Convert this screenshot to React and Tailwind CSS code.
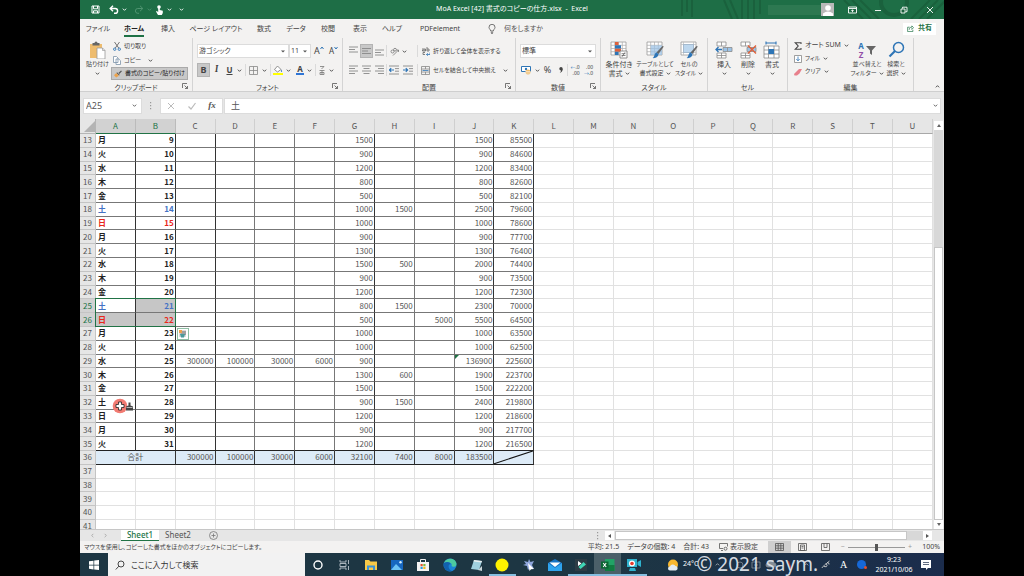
import { useState } from "react";

const COLUMNS = "ABCDEFGHIJKLMNOPQRSTU".split("");
const DAYS = ["月", "火", "水", "木", "金", "土", "日"];
const FIRST_ROW = 13;
const TOTAL_ROW = 36;
const LAST_ROW = 41;

// Sheet row -> [G, J, K] with the occasional extra columns alongside
const VALUES = {
  13: { G: 1500, J: 1500, K: 85500 },
  14: { G: 900, J: 900, K: 84600 },
  15: { G: 1200, J: 1200, K: 83400 },
  16: { G: 800, J: 800, K: 82600 },
  17: { G: 500, J: 500, K: 82100 },
  18: { G: 1000, H: 1500, J: 2500, K: 79600 },
  19: { G: 1000, J: 1000, K: 78600 },
  20: { G: 900, J: 900, K: 77700 },
  21: { G: 1300, J: 1300, K: 76400 },
  22: { G: 1500, H: 500, J: 2000, K: 74400 },
  23: { G: 900, J: 900, K: 73500 },
  24: { G: 1200, J: 1200, K: 72300 },
  25: { G: 800, H: 1500, J: 2300, K: 70000 },
  26: { G: 500, I: 5000, J: 5500, K: 64500 },
  27: { G: 1000, J: 1000, K: 63500 },
  28: { G: 1000, J: 1000, K: 62500 },
  29: { C: 300000, D: 100000, E: 30000, F: 6000, G: 900, J: 136900, K: 225600 },
  30: { G: 1300, H: 600, J: 1900, K: 223700 },
  31: { G: 1500, J: 1500, K: 222200 },
  32: { G: 900, H: 1500, J: 2400, K: 219800 },
  33: { G: 1200, J: 1200, K: 218600 },
  34: { G: 900, J: 900, K: 217700 },
  35: { G: 1200, J: 1200, K: 216500 },
  36: { C: 300000, D: 100000, E: 30000, F: 6000, G: 32100, H: 7400, I: 8000, J: 183500 },
};

const TABS = [
  ["ファイル", "w-9"],
  ["ホーム", "w-9"],
  ["挿入", "w-8"],
  ["ページ レイアウト", "w-16"],
  ["数式", "w-8"],
  ["データ", "w-8"],
  ["校閲", "w-8"],
  ["表示", "w-8"],
  ["ヘルプ", "w-8"],
  ["PDFelement", "w-16"],
];

function Chevron({ className = "" }) {
  return (
    <svg viewBox="0 0 6 6" className={`size-[5px] shrink-0 ${className}`} fill="none" stroke="currentColor" strokeWidth="1.1">
      <path d="M1 2l2 2 2-2" />
    </svg>
  );
}

function Launcher() {
  return (
    <button aria-label="詳細設定" className="absolute right-1 bottom-0.5">
      <svg viewBox="0 0 6 6" className="size-[6px]" fill="none" stroke="#555" strokeWidth="0.8">
        <path d="M.5 5V.5H5M2.5 2.5l3 3M5.500 3v2.500H3" />
      </svg>
    </button>
  );
}

function Group({ label, className, launcher, children }) {
  return (
    <section aria-label={label} className={`relative flex shrink-0 flex-col border-r border-[#d4d4d4] ${className}`}>
      <div className="flex h-[45px] items-start pt-px">{children}</div>
      <div className="flex h-2 items-center justify-center leading-none">{label}</div>
      {launcher && <Launcher />}
    </section>
  );
}

function BigButton({ icon, lines, className = "w-6", chevronBelow }) {
  return (
    <button className={`flex shrink-0 flex-col items-center ${className}`}>
      <span className="flex h-[21px] items-center">{icon}</span>
      <span className="leading-[9px]">{lines[0]}</span>
      {chevronBelow ? (
        <Chevron className="mt-0.5" />
      ) : (
        <span className="flex items-center gap-0.5 leading-[9px]">
          {lines[1]}
          <Chevron />
        </span>
      )}
    </button>
  );
}

function IconButton({ label, active, className = "w-[13px]", children }) {
  return (
    <button
      aria-label={label}
      className={`flex h-[14px] shrink-0 items-center justify-center ${className} ${active ? "border border-[#b4b4b4] bg-[#c8c8c8]" : ""}`}
    >
      {children}
    </button>
  );
}

function Divider() {
  return <span className="h-3 w-px shrink-0 bg-[#dadada]" />;
}

function Picker({ label, value, className }) {
  return (
    <div className={`relative flex h-[14px] shrink-0 border border-[#dcdcdc] bg-white ${className}`}>
      <select aria-label={label} defaultValue={value} className="w-full appearance-none bg-transparent pl-px text-[7px] leading-3 outline-none">
        <option>{value}</option>
      </select>
      <svg viewBox="0 0 4 3" className="absolute top-[5px] right-[3px] h-[3px] w-1 fill-[#555]">
        <path d="M0 .5h4L2 2.500z" />
      </svg>
    </div>
  );
}

function Lines({ widths, justify = "start", top = 1 }) {
  return (
    <svg viewBox="0 0 9 10" className="h-[10px] w-[9px]" stroke="#888" strokeWidth="0.9">
      {widths.map((w, i) => {
        const x = justify === "start" ? 0 : justify === "end" ? 9 - w : (9 - w) / 2;
        return <path key={i} d={`M${x} ${top + i * 2.5}h${w}`} />;
      })}
    </svg>
  );
}

function IndentIcon({ flip }) {
  return (
    <svg viewBox="0 0 10 10" className="size-[10px]" fill="none" stroke="#888" strokeWidth="0.9">
      <path d="M0 1h10M6 3.600h4M6 6.200h4M0 9h10" />
      <path stroke="#2e75b6" strokeWidth="1.200" d={flip ? "M0 5h4.500M2.800 3.200L4.600 5 2.800 6.800" : "M.5 5H5M2.200 3.200L.4 5l1.800 1.800"} />
    </svg>
  );
}

function TableIcon({ kind }) {
  return (
    <svg viewBox="0 0 18 18" className="size-[18px]" fill="none">
      <path d="M1 1h15v13H1z" fill="#fff" stroke="#999" strokeWidth=".8" />
      {kind !== "style" && <path d="M1 4.300h15M1 7.500h15M1 10.700h15M4.700 1v13M8.500 1v13M12.300 1v13" stroke="#aaa" strokeWidth=".7" />}
      {kind === "cond" && (
        <>
          <path d="M5 1h3.500v3.300H5zM5 7.500h6v3.200H5z" fill="#e0603a" />
          <path d="M5 4.300h6v3.200H5zM5 10.700h3.500V14H5z" fill="#2e75b6" />
          <path d="M10 10h7v7h-7z" fill="#fff" stroke="#777" strokeWidth=".8" />
          <path d="M11.500 12.700h4M11.500 14.500h4M15 11.300l-3 4.500" stroke="#555" strokeWidth=".7" />
        </>
      )}
      {kind === "table" && <path d="M4.700 4.300H16V14H4.700z" fill="#9dc3e6" fillOpacity=".75" />}
      {kind === "style" && (
        <>
          <path d="M1 3.500h15M1 11.500h15M3.500 1v13M13.500 1v13" stroke="#bbb" strokeWidth=".7" />
          <path d="M3.500 3.500h10v8h-10z" fill="#bdd7ee" stroke="#8faac2" strokeWidth=".6" />
        </>
      )}
      {kind !== "cond" && (
        <>
          <path d="M17.800 5.500L12.500 13l-2-1.500L16.500 5z" fill="#666" />
          <path d="M10.200 11.300l2.300 1.800c0 2.500-2.500 4.500-6 4 2-.8 1.700-4.300 3.700-5.800z" fill="#2e75b6" />
        </>
      )}
    </svg>
  );
}

function CellsIcon({ kind }) {
  return (
    <svg viewBox="0 0 18 18" className="size-[18px]" fill="#fff" stroke="#8c8c8c" strokeWidth=".8">
      {kind === "format" ? (
        <>
          <path d="M1 5h15v12H1zM1 9h15M1 13h15M5.500 5v12M11 5v12" />
          <path d="M5.500 8h5.500v5H5.500z" fill="#2e75b6" stroke="none" />
          <path d="M3 2h10M3 .5v3M13 .5v3" stroke="#2e75b6" strokeWidth="1.100" />
        </>
      ) : (
        <>
          <path d="M2 1h9v4H2zM6.500 1v4M2 12h9v5H2zM6.500 12v5M2 14.500h9" />
          <path d="M8 6.500h9v4H8zM12.500 6.500v4" fill="#9dc3e6" />
          {kind === "insert" ? (
            <path d="M7 8.500H1M3.500 6L1 8.500 3.500 11" fill="none" stroke="#2e75b6" strokeWidth="1.300" />
          ) : (
            <path d="M9 4.500l8 8M17 4.500l-8 8" fill="none" stroke="#e0603a" strokeWidth="1.400" />
          )}
        </>
      )}
    </svg>
  );
}

function TitleBar() {
  return (
    <header className="relative flex h-[19px] shrink-0 items-center bg-[#1e6e46] text-white">
      <div className="flex w-[110px] items-center gap-[3px] pl-[11px]">
        <button aria-label="上書き保存">
          <svg viewBox="0 0 9 9" className="size-[9px]" fill="none" stroke="#fff" strokeWidth="1">
            <path d="M1 1h7v7H1zM2.500 1v2.800h4V1M2.500 8V5.800h4V8" />
          </svg>
        </button>
        <button aria-label="元に戻す" className="ml-1.5 flex items-center gap-[3px]">
          <svg viewBox="0 0 10 9" className="h-[9px] w-[10px]" fill="none" stroke="#fff" strokeWidth="1.400">
            <path d="M4 .8L1.200 3.500 4 6.200M1.200 3.500h5a2.400 2.400 0 010 4.800H5" />
          </svg>
          <Chevron />
        </button>
        <button aria-label="やり直し" className="ml-1 flex items-center gap-[3px] text-[#4f9470]">
          <svg viewBox="0 0 10 9" className="h-[9px] w-[10px]" fill="none" stroke="currentColor" strokeWidth="1">
            <path d="M6 .8l2.800 2.700L6 6.200M8.800 3.500h-5a2.400 2.400 0 000 4.800H5" />
          </svg>
          <Chevron />
        </button>
        <button aria-label="タッチ/マウス モード" className="flex items-center gap-[3px]">
          <svg viewBox="0 0 9 10" className="h-[10px] w-[9px]" fill="#fff">
            <circle cx="4" cy="2" r="1.800" />
            <path d="M3.200 2h1.600v3l3 .8V8l-1 2H3L1 6.500l.8-.6L3.200 7z" />
          </svg>
          <Chevron />
        </button>
        <button aria-label="クイック アクセスのカスタマイズ" className="ml-1">
          <Chevron />
        </button>
      </div>
      <h1 className="absolute inset-x-0 text-center text-[7px]">MoA Excel [42] 書式のコピーの仕方.xlsx&nbsp; -&nbsp; Excel</h1>
      <svg viewBox="0 0 280 19" preserveAspectRatio="xMaxYMid slice" className="ml-auto h-full w-[280px]" fill="none" stroke="#1a613d" strokeWidth="2">
        <path d="M18 0v16M23 0v12M28 0v17M60 0l8 19M66 0l8 19M78 0v19M84 0v19M90 0v19M96 0v14M180 0l19 19M188 0l19 19M196 0l19 19M266 0l-19 19M274 0l-19 19M282 0l-19 19" />
        <circle cx="230" cy="2" r="13" strokeWidth="4" />
      </svg>
      <div className="absolute right-0 flex h-full items-center">
        <span className="h-2.5 w-[53px] bg-[#2d7851]" />
        <span className="mr-[14px] flex size-[13px] items-end justify-center bg-[#b9b9b9]">
          <svg viewBox="0 0 10 12" className="h-3 w-2.5" fill="#fff">
            <circle cx="5" cy="4" r="2.800" />
            <path d="M0 12V9.500Q5 5.500 10 9.500V12z" />
          </svg>
        </span>
        <button aria-label="リボンの表示オプション" className="flex w-[26px] justify-start">
          <svg viewBox="0 0 9 8" className="h-2 w-[9px]" fill="none" stroke="#fff" strokeWidth=".9">
            <path d="M.5 1h8v6h-8zM.5 2.500h8M4.500 6.200V3.800M3.300 5l1.200-1.200L5.700 5" />
          </svg>
        </button>
        <button aria-label="最小化" className="flex w-[26px] justify-start">
          <svg viewBox="0 0 8 8" className="size-2" stroke="#fff" strokeWidth=".9">
            <path d="M1 4.500h6" />
          </svg>
        </button>
        <button aria-label="元のサイズに戻す" className="flex w-[26px] justify-start">
          <svg viewBox="0 0 8 8" className="size-2" fill="none" stroke="#fff" strokeWidth=".9">
            <path d="M1 3h4v4H1zM2.500 2.500V1.200H7v4.500H5.500" />
          </svg>
        </button>
        <button aria-label="閉じる" className="flex w-[18px] justify-start">
          <svg viewBox="0 0 8 8" className="size-2" stroke="#fff" strokeWidth=".9">
            <path d="M1 1l6 6M7 1L1 7" />
          </svg>
        </button>
      </div>
    </header>
  );
}

function RibbonTabs() {
  return (
    <nav className="flex h-[19px] shrink-0 items-center bg-[#f3f2f1] pr-2 text-[7px] text-[#444]">
      {TABS.map(([name, width]) => (
        <button key={name} className={`flex h-full shrink-0 items-center justify-center leading-3 whitespace-nowrap ${width}`}>
          <span className={name === "ホーム" ? "border-y-2 border-t-transparent border-b-[#1e7145] font-bold text-[#222]" : ""}>
            {name}
          </span>
        </button>
      ))}
      <label className="ml-4 flex items-center gap-2">
        <svg viewBox="0 0 8 10" className="h-[10px] w-2" fill="none" stroke="#555" strokeWidth=".8">
          <path d="M2.700 7C2.700 5.500 1 5 1 3.300a3 3 0 016 0C7 5 5.300 5.500 5.300 7zM2.800 8.300h2.400M3.200 9.500h1.600" />
        </svg>
        <input aria-label="操作アシスト" placeholder="何をしますか" className="w-16 bg-transparent leading-3 outline-none placeholder:text-[#555]" />
      </label>
      <button className="ml-auto flex h-3 w-[33px] items-center justify-center gap-1 bg-white font-bold text-[#1e7145]">
        <svg viewBox="0 0 8 8" className="size-[7px]" fill="none" stroke="currentColor" strokeWidth=".8">
          <path d="M3 2.500H.7v5h6V5.500M2.500 5.500c0-2 1-3 3-3V1l2 2-2 2V3.700" />
        </svg>
        共有
      </button>
    </nav>
  );
}

function Ribbon() {
  return (
    <div className="relative flex h-[54px] shrink-0 border-b border-[#cfcfcf] bg-[#f3f2f1] text-[7px] whitespace-nowrap text-[#444]">
      <Group label="クリップボード" className="w-[113px]" launcher>
        <BigButton
          className="ml-1 w-[27px] text-[6px]"
          chevronBelow
          lines={["貼り付け"]}
          icon={
            <svg viewBox="0 0 17 18" className="h-[18px] w-[17px]">
              <path d="M1 3h12v14H1z" fill="#eebc6e" />
              <path d="M3.500 2h2a1.500 1.500 0 013 0h2v2.500h-7z" fill="#666" />
              <path d="M8 7h5.500L16 9.500V18H8z" fill="#fff" stroke="#999" strokeWidth=".8" />
              <path d="M13.500 7v2.500H16" fill="none" stroke="#999" strokeWidth=".7" />
            </svg>
          }
        />
        <div className="flex flex-col items-start text-[6px]">
          <button className="flex h-[15px] items-center gap-[3px] px-0.5">
            <svg viewBox="0 0 8 9" className="h-[9px] w-2" fill="none" stroke="#666" strokeWidth=".9">
              <path d="M1.500 0L5.700 6M6.500 0L2.300 6" />
              <circle cx="1.700" cy="7.200" r="1.200" stroke="#2e75b6" />
              <circle cx="6.300" cy="7.200" r="1.200" stroke="#2e75b6" />
            </svg>
            切り取り
          </button>
          <button className="flex h-[13px] items-center gap-[3px] px-0.5">
            <svg viewBox="0 0 8 9" className="h-[9px] w-2" fill="#fff" stroke="#7c93a8" strokeWidth=".8">
              <path d="M.5.5h3L5 2v4.500H.5zM3 3h2.800L7.500 4.700v3.800H3z" />
            </svg>
            コピー
            <Chevron className="ml-1" />
          </button>
          <button className="flex h-[13px] w-[77px] items-center gap-[3px] border border-[#aaa] bg-[#c8c8c8] px-0.5 text-[#222]">
            <svg viewBox="0 0 9 8" className="h-2 w-[9px]">
              <path d="M5 3L8 0l1 1-3 3z" fill="#555" />
              <path d="M3.500 2l3 3-.8.800-3-3z" fill="#555" />
              <path d="M2.500 3l3 3L2.500 8 0 5.500z" fill="#eda24a" />
            </svg>
            <span>書式のコピー/貼り付け</span>
          </button>
        </div>
      </Group>

      <Group label="フォント" className="w-[150px]" launcher>
        <div className="flex flex-col gap-[5px] pt-[5px] pl-1">
          <div className="flex items-center">
            <Picker label="フォント名" value="游ゴシック" className="w-[92px]" />
            <Picker label="フォント サイズ" value="11" className="w-[22px]" />
            <IconButton label="フォント サイズの拡大" className="w-4">
              <span className="text-[9px]">A</span>
              <svg viewBox="0 0 4 4" className="mb-1.5 size-1" fill="none" stroke="#2e75b6"><path d="M.5 3L2 1l1.500 2" /></svg>
            </IconButton>
            <IconButton label="フォント サイズの縮小">
              <span className="text-[8px]">A</span>
              <svg viewBox="0 0 4 4" className="mb-1.5 size-1" fill="none" stroke="#2e75b6"><path d="M.5 1L2 3l1.500-2" /></svg>
            </IconButton>
          </div>
          <div className="flex items-center">
            <IconButton label="太字" active><span className="text-[9px] font-bold">B</span></IconButton>
            <IconButton label="斜体"><span className="font-serif text-[9px] font-bold italic">I</span></IconButton>
            <IconButton label="下線" className="w-[22px] gap-1"><span className="text-[8px] font-bold underline">U</span><Chevron /></IconButton>
            <Divider />
            <IconButton label="罫線" className="w-6 gap-1">
              <svg viewBox="0 0 9 9" className="size-[9px]" fill="none" stroke="#888" strokeWidth=".8"><path d="M.5.5h8v8h-8zM4.500.5v8M.5 4.500h8" /></svg>
              <Chevron />
            </IconButton>
            <Divider />
            <IconButton label="塗りつぶしの色" className="w-[22px] gap-[3px]">
              <svg viewBox="0 0 10 10" className="size-[10px]">
                <path d="M4.500 1L8 4.500 4.500 7 1.500 4.500z" fill="#fff" stroke="#777" strokeWidth=".8" />
                <path d="M8 4.500q1.800 1.500.8 2.500-1.200 0-.8-2.500z" fill="#2e75b6" />
                <path d="M0 8h10v2H0z" fill="#ff0" />
              </svg>
              <Chevron />
            </IconButton>
            <IconButton label="フォントの色" className="w-[22px] gap-[3px]">
              <span className="border-b-2 border-[#2e75d6] px-px text-[8px] leading-[8px] font-bold">A</span>
              <Chevron />
            </IconButton>
            <Divider />
            <IconButton label="ふりがなの表示/非表示" className="w-5 gap-1">
              <svg viewBox="0 0 6 9" className="h-[9px] w-1.5" fill="none" stroke="#777" strokeWidth=".8"><path d="M1 .5h4L2.500 3M.5 4.500h5M1 6.500h4v2H1zM3 4.500v4" /></svg>
              <Chevron />
            </IconButton>
          </div>
        </div>
      </Group>

      <Group label="配置" className="w-[173px]" launcher>
        <div className="flex flex-col gap-[5px] pt-[5px] pl-1">
          <div className="flex items-center">
            <IconButton label="上揃え"><Lines widths={[9, 6, 9]} top={1} /></IconButton>
            <IconButton label="上下中央揃え" active><Lines widths={[9, 6, 9]} top={2.5} /></IconButton>
            <IconButton label="下揃え"><Lines widths={[9, 6, 9]} top={4} /></IconButton>
            <Divider />
            <IconButton label="方向" className="w-[30px] justify-start gap-[3px] pl-[3px]">
              <svg viewBox="0 0 9 9" className="size-[9px]" fill="none" stroke="#777" strokeWidth=".8">
                <circle cx="2.500" cy="4.500" r="1.500" /><circle cx="5" cy="2.700" r="1.400" /><path d="M3 8.500L8.500 3M8.500 5V3h-2" />
              </svg>
              <Chevron />
            </IconButton>
            <Divider />
            <button className="flex items-center gap-[3px] pl-1 text-[6px]">
              <svg viewBox="0 0 8 9" className="h-[9px] w-2" fill="none" stroke="#666" strokeWidth=".8">
                <path d="M0 2h3.500v2H.5V3h3M5 0v4h2V2H5M3 5.500H1v2h2" />
                <path d="M8 5.500v2H4.500M5.800 6.200L4.500 7.500l1.300 1.300" stroke="#2e75b6" />
              </svg>
              <span>折り返して全体を表示する</span>
            </button>
          </div>
          <div className="flex items-center">
            <IconButton label="左揃え"><Lines widths={[9, 6, 9, 6]} /></IconButton>
            <IconButton label="中央揃え"><Lines widths={[9, 6, 9, 6]} justify="center" /></IconButton>
            <IconButton label="右揃え"><Lines widths={[9, 6, 9, 6]} justify="end" /></IconButton>
            <Divider />
            <IconButton label="インデントを減らす" className="w-[14px]"><IndentIcon /></IconButton>
            <IconButton label="インデントを増やす" className="w-4 pr-[3px]"><IndentIcon flip /></IconButton>
            <Divider />
            <button className="flex items-center gap-[3px] pl-[3px] text-[6px]">
              <svg viewBox="0 0 9 9" className="size-[9px]" fill="none" stroke="#888" strokeWidth=".8">
                <path d="M.5.5h8v8h-8zM.5 3h8M.5 6h8M4.500.5V3M4.500 6v2.500" />
                <path d="M1.500 4.500h6" stroke="#2e75b6" />
              </svg>
              <span>セルを結合して中央揃え</span>
              <Chevron className="ml-1" />
            </button>
          </div>
        </div>
      </Group>

      <Group label="数値" className="w-[85px]" launcher>
        <div className="flex flex-col gap-[5px] pt-[5px] pl-1">
          <Picker label="表示形式" value="標準" className="w-[76px]" />
          <div className="flex items-center">
            <IconButton label="通貨表示形式" className="w-[21px] gap-1">
              <svg viewBox="0 0 10 9" className="h-[9px] w-[10px]">
                <path d="M.5.500h9v5h-9z" fill="#fff" stroke="#2e75b6" />
                <circle cx="5" cy="3" r="1.200" fill="#2e75b6" />
                <ellipse cx="7" cy="6" rx="2.500" ry="2.500" fill="#eebc6e" />
                <path d="M4.500 5.500h5M4.500 7h5" stroke="#fff" strokeWidth=".5" />
              </svg>
              <Chevron />
            </IconButton>
            <IconButton label="パーセント スタイル"><span className="text-[9px]">%</span></IconButton>
            <IconButton label="桁区切りスタイル">
              <svg viewBox="0 0 4 6" className="h-1.5 w-1" fill="#444"><circle cx="2" cy="1.800" r="1.700" /><path d="M3.700 1.800Q3.700 5 .8 6q1.400-1.600 1.200-3z" /></svg>
            </IconButton>
            <Divider />
            <IconButton label="小数点以下の表示桁数を増やす" className="w-[14px]">
              <span className="text-right text-[5px] leading-[6px]"><span className="text-[#2e75b6]">←</span>.0<br />.00</span>
            </IconButton>
            <IconButton label="小数点以下の表示桁数を減らす">
              <span className="text-right text-[5px] leading-[6px]">.00<br /><span className="text-[#2e75b6]">→</span>.0</span>
            </IconButton>
          </div>
        </div>
      </Group>

      <Group label="スタイル" className="w-[107px]">
        <BigButton className="w-9" lines={["条件付き", "書式"]} icon={<TableIcon kind="cond" />} />
        <BigButton className="w-9 text-[6px]" lines={["テーブルとして", "書式設定"]} icon={<TableIcon kind="table" />} />
        <BigButton className="w-8 text-[6px]" lines={["セルの", "スタイル"]} icon={<TableIcon kind="style" />} />
      </Group>

      <Group label="セル" className="w-20">
        <BigButton className="ml-1 w-6" chevronBelow lines={["挿入"]} icon={<CellsIcon kind="insert" />} />
        <BigButton className="w-6" chevronBelow lines={["削除"]} icon={<CellsIcon kind="delete" />} />
        <BigButton className="w-6" chevronBelow lines={["書式"]} icon={<CellsIcon kind="format" />} />
      </Group>

      <Group label="編集" className="w-[126px]">
        <div className="flex w-[62px] flex-col pl-1.5">
          <button className="flex h-[13px] items-center gap-[3px]">
            <svg viewBox="0 0 8 8" className="size-2" fill="none" stroke="#444" strokeWidth="1.100"><path d="M7 2V.7H1.200L4.200 4l-3 3.300H7V6" /></svg>
            オート SUM
            <Chevron />
          </button>
          <button className="flex h-[13px] items-center gap-[3px] text-[6px]">
            <svg viewBox="0 0 8 8" className="size-2" fill="#fff" stroke="#888" strokeWidth=".8">
              <path d="M.5.500h7v7h-7z" /><path d="M4 1.500v4.300M2.300 4L4 5.800 5.700 4" stroke="#2e75b6" fill="none" />
            </svg>
            フィル
            <Chevron />
          </button>
          <button className="flex h-[13px] items-center gap-[3px] text-[6px]">
            <svg viewBox="0 0 8 8" className="size-2" fill="#e8808c"><path d="M5 1h3L5.500 5.500 3 7.500H.5L0 6z" /></svg>
            クリア
            <Chevron />
          </button>
        </div>
        <BigButton
          className="w-[34px] text-[6px]"
          lines={["並べ替えと", "フィルター"]}
          icon={
            <span className="flex items-center">
              <span className="flex flex-col text-[8px] leading-[9px] font-bold">
                <span className="text-[#2e75b6]">A</span>
                <span className="text-[#9450a8]">Z</span>
              </span>
              <svg viewBox="0 0 10 10" className="ml-0.5 size-[10px]" fill="#666"><path d="M0 1h10L6 5.500V10L4 8.500v-3z" /></svg>
            </span>
          }
        />
        <BigButton
          className="w-6 text-[6px]"
          lines={["検索と", "選択"]}
          icon={
            <svg viewBox="0 0 17 17" className="size-[17px]" fill="none" stroke="#2e75b6" strokeWidth="1.500">
              <circle cx="10.500" cy="6.500" r="5" /><path d="M7 10l-5.500 5.500" strokeWidth="2.200" />
            </svg>
          }
        />
      </Group>
      <button aria-label="リボンを折りたたむ" className="mt-auto mr-1 mb-0.5 ml-auto">
        <Chevron className="rotate-180" />
      </button>
    </div>
  );
}

function FormulaBar() {
  return (
    <div className="flex h-[27px] shrink-0 items-center bg-[#e6e6e6] pr-[3px] pl-[3px] text-[9px] text-[#555]">
      <label className="relative flex h-4 w-[59px] shrink-0 items-center border border-[#dcdcdc] bg-white">
        <input aria-label="名前ボックス" defaultValue="A25" className="w-full bg-transparent pl-0.5 outline-none" />
        <Chevron className="mr-1" />
      </label>
      <svg viewBox="0 0 2 8" className="mx-2 h-2 w-0.5 shrink-0 fill-[#999]">
        <path d="M0 0h1.200v1.200H0zM0 3h1.200v1.200H0zM0 6h1.200v1.200H0z" />
      </svg>
      <div className="flex h-4 w-[63px] shrink-0 items-center justify-around border border-[#dcdcdc] bg-white">
        <button aria-label="キャンセル">
          <svg viewBox="0 0 8 8" className="size-2" stroke="#bbb"><path d="M1 1l6 6M7 1L1 7" /></svg>
        </button>
        <button aria-label="入力">
          <svg viewBox="0 0 8 8" className="size-2" fill="none" stroke="#bbb" strokeWidth="1.200"><path d="M.5 4.500L3 7l4.500-6" /></svg>
        </button>
        <button aria-label="関数の挿入" className="font-['Liberation_Serif',serif] font-bold italic">fx</button>
      </div>
      <label className="ml-px flex h-4 flex-1 items-center border border-[#dcdcdc] bg-white pr-0.5">
        <input aria-label="数式バー" defaultValue="土" className="w-full bg-transparent pl-1.5 outline-none" />
        <Chevron />
      </label>
    </div>
  );
}

function dayColor(row) {
  if (row === 18 || row === 25) return "text-[#4472c4]";
  if (row === 19 || row === 26) return "text-[#e8271b]";
  return "text-[#222]";
}

function Cell({ col, row }) {
  if (COLUMNS.indexOf(col) > 10 || row > TOTAL_ROW) {
    return <td className="border-r border-b border-[#e1e1e1] p-0" />;
  }
  const right = "ABCGJK".includes(col) || row === TOTAL_ROW ? "border-r-[#333]" : "border-r-[#777]";
  const bottom = row >= TOTAL_ROW - 1 ? "border-b-[#222]" : "border-b-[#777]";

  if (row === TOTAL_ROW) {
    if (col === "B") return null;
    return (
      <td
        colSpan={col === "A" ? 2 : 1}
        className={`border-r border-b bg-[#ddebf7] p-0 text-[#555] ${right} ${bottom} ${col === "A" ? "text-center" : "pr-px text-right"} ${
          col === "K" ? "relative" : ""
        }`}
      >
        {col === "A" && "合計"}
        {col === "K" ? (
          <svg viewBox="0 0 40 14" preserveAspectRatio="none" className="absolute inset-0 size-full" stroke="#111" strokeWidth="1.200">
            <path d="M0 14L40 0" />
          </svg>
        ) : (
          VALUES[row][col]
        )}
      </td>
    );
  }

  if (col === "A" || col === "B") {
    const selected = (row === 25 && col === "B") || row === 26;
    return (
      <td
        className={`relative border-r border-b p-0 font-bold ${right} ${bottom} ${dayColor(row)} ${selected ? "bg-[#c6c6c6]" : ""} ${
          col === "A" ? "pl-0.5 text-left" : "pr-px text-right"
        }`}
      >
        {col === "A" ? DAYS[(row - FIRST_ROW) % 7] : row - 4}
        {col === "A" && row === 25 && <span className="absolute -top-px -left-px z-10 h-[29px] w-[81px] border border-[#217346]" />}
        {col === "A" && row === 32 && <Pointer />}
      </td>
    );
  }

  return (
    <td className={`relative border-r border-b p-0 pr-px text-right text-[#555] ${right} ${bottom}`}>
      {VALUES[row][col]}
      {col === "C" && row === 27 && <PasteOptions />}
      {col === "J" && row === 29 && (
        <svg viewBox="0 0 4 4" className="absolute top-0 left-0 size-1 fill-[#1e7145]"><path d="M0 0h4L0 4z" /></svg>
      )}
    </td>
  );
}

function Pointer() {
  return (
    <svg viewBox="0 0 24 16" className="absolute top-0.5 left-4 z-20 h-4 w-6">
      <circle cx="8" cy="8" r="7.300" fill="#f27b72" />
      <path d="M6.500 4h3v2.500H12v3H9.500V12h-3V9.500H4v-3h2.500z" fill="#fff" stroke="#222" strokeWidth=".8" />
      <path d="M16.500 4.500h2v3l2.500 1v4h-7v-4l2.500-1z" fill="#444" />
      <path d="M14.500 9.500h6" stroke="#fff" strokeWidth=".6" />
    </svg>
  );
}

function PasteOptions() {
  return (
    <button aria-label="貼り付けのオプション" className="absolute top-px left-px z-10 flex size-3 items-center justify-center border border-[#8fbfa5] bg-white">
      <svg viewBox="0 0 9 9" className="size-[9px]">
        <path d="M1 1h7v7H1z" fill="#ddd" />
        <path d="M1 1h3v3H1z" fill="#eda24a" />
        <path d="M4 3h4M2.500 5h5.500" stroke="#555" strokeWidth=".9" />
        <path d="M2 5h5l-1 3.500H3z" fill="#4a9a9a" />
      </svg>
    </button>
  );
}

function Sheet() {
  const rows = Array.from({ length: LAST_ROW - FIRST_ROW + 1 }, (_, i) => FIRST_ROW + i);

  return (
    <div className="flex min-h-0 flex-1 bg-[#e6e6e6]">
      <div className="min-w-0 flex-1 overflow-hidden">
        <table className="h-[415px] w-full table-fixed border-separate border-spacing-0 bg-white font-['Noto_Sans_CJK_JP',sans-serif] text-[8px] leading-3">
          <thead>
            <tr className="h-[15px] bg-[#e6e6e6] text-[#555]">
              <th className="w-4 border-r border-b border-[#b5b5b5] p-0">
                <svg viewBox="0 0 11 11" className="ml-1 size-[11px] fill-[#b4b4b4]"><path d="M11 0v11H0z" /></svg>
              </th>
              {COLUMNS.map((col) => (
                <th
                  key={col}
                  scope="col"
                  className={`border-r border-b p-0 font-normal ${
                    col === "A" || col === "B"
                      ? "border-r-[#bbb] border-b-[#217346] bg-[#d2d2d2] text-[#217346]"
                      : "border-r-[#cfcfcf] border-b-[#a8a8a8]"
                  }`}
                >
                  {col}
                </th>
              ))}
            </tr>
          </thead>
          <tbody>
            {rows.map((row) => (
              <tr key={row}>
                <th
                  scope="row"
                  className={`border-r border-b border-[#c4c4c4] p-0 font-normal ${
                    row === 25 || row === 26 ? "bg-[#d2d2d2] text-[#217346]" : "bg-[#e6e6e6] text-[#555]"
                  }`}
                >
                  {row}
                </th>
                {COLUMNS.map((col) => (
                  <Cell key={col} col={col} row={row} />
                ))}
              </tr>
            ))}
          </tbody>
        </table>
      </div>
      <div className="flex w-[11px] shrink-0 flex-col items-center pt-0.5">
        <button aria-label="上へスクロール" className="flex h-[9px] w-[9px] items-center justify-center bg-white">
          <svg viewBox="0 0 4 3" className="h-[3px] w-1 fill-[#666]"><path d="M2 0l2 3H0z" /></svg>
        </button>
        <div className="h-[117px] w-[9px] bg-[#d8d8d8]" />
        <div className="w-[9px] flex-1 border border-[#c6c6c6] bg-white" />
        <button aria-label="下へスクロール" className="flex h-[9px] w-[9px] items-center justify-center bg-white">
          <svg viewBox="0 0 4 3" className="h-[3px] w-1 fill-[#666]"><path d="M0 0h4L2 3z" /></svg>
        </button>
      </div>
    </div>
  );
}

function SheetTabs() {
  const [active, setActive] = useState("Sheet1");
  return (
    <div className="flex h-3 shrink-0 items-stretch border-t border-[#c6c6c6] bg-[#e6e6e6] text-[8px] leading-[10px] text-[#555]">
      <div className="flex w-[41px] items-center gap-2 pl-2.5 text-[#aaa]">
        <Chevron className="rotate-90" />
        <Chevron className="-rotate-90" />
      </div>
      {["Sheet1", "Sheet2"].map((name) => (
        <button
          key={name}
          onClick={() => setActive(name)}
          className={`w-[38px] border-b ${active === name ? "border-[#217346] bg-white font-medium text-[#217346]" : "border-transparent"}`}
        >
          {name}
        </button>
      ))}
      <button aria-label="新しいシート" className="ml-3 flex items-center">
        <svg viewBox="0 0 9 9" className="size-[9px]" fill="none" stroke="#777" strokeWidth=".8">
          <circle cx="4.500" cy="4.500" r="4" /><path d="M4.500 2.500v4M2.500 4.500h4" />
        </svg>
      </button>
      <div className="ml-auto flex w-[347px] items-center">
        <svg viewBox="0 0 2 8" className="mr-1.5 h-2 w-0.5 fill-[#999]"><path d="M0 0h1.200v1.200H0zM0 3h1.200v1.200H0zM0 6h1.200v1.200H0z" /></svg>
        <button aria-label="左へスクロール" className="flex h-[9px] w-[9px] items-center justify-center bg-white">
          <svg viewBox="0 0 3 4" className="h-1 w-[3px] fill-[#555]"><path d="M3 0v4L0 2z" /></svg>
        </button>
        <div className="ml-px h-[9px] flex-1 border border-[#c6c6c6] bg-white" />
        <div className="h-[9px] w-4 bg-[#d8d8d8]" />
        <button aria-label="右へスクロール" className="mr-3 flex h-[9px] w-[9px] items-center justify-center bg-white">
          <svg viewBox="0 0 3 4" className="h-1 w-[3px] fill-[#555]"><path d="M0 0v4l3-2z" /></svg>
        </button>
      </div>
    </div>
  );
}

function StatusBar() {
  return (
    <footer className="flex h-3 shrink-0 items-center bg-[#f3f2f1] pr-1 pl-1 text-[7px] whitespace-nowrap text-[#444]">
      <span className="text-[6px]">マウスを使用し、コピーした書式をほかのオブジェクトにコピーします。</span>
      <span className="ml-auto">平均: 21.5</span>
      <span className="ml-2">データの個数: 4</span>
      <span className="ml-2">合計: 43</span>
      <button className="ml-2.5 flex w-[49px] items-center gap-0.5">
        <svg viewBox="0 0 9 8" className="h-2 w-[9px]" fill="none" stroke="#555" strokeWidth=".8">
          <path d="M4 5.500H.5V.5h8v3M2 7.500h2" /><circle cx="6.500" cy="5.700" r="1.500" />
        </svg>
        表示設定
      </button>
      <button aria-label="標準" className="flex h-3 w-[23px] items-center justify-center bg-[#cfcfcf]">
        <svg viewBox="0 0 9 8" className="h-2 w-[9px]" fill="none" stroke="#555" strokeWidth=".8"><path d="M.5.5h8v7h-8zM.5 2.800h8M.5 5.200h8M3.200.5v7M5.800.5v7" /></svg>
      </button>
      <button aria-label="ページ レイアウト" className="flex w-[23px] items-center justify-center">
        <svg viewBox="0 0 9 8" className="h-2 w-[9px]" fill="none" stroke="#555" strokeWidth=".8"><path d="M.5.5h8v7h-8zM2.500 2h4v5.500h-4zM3.500 3.500h2M3.500 5h2" /></svg>
      </button>
      <button aria-label="改ページ プレビュー" className="flex w-[23px] items-center justify-center">
        <svg viewBox="0 0 9 8" className="h-2 w-[9px]" fill="none" stroke="#555" strokeWidth=".8"><path d="M.5.5h8v7h-8zM3 .5v4h3v-4" /></svg>
      </button>
      <button aria-label="縮小" className="ml-1 text-[#999]">−</button>
      <input
        type="range"
        aria-label="ズーム"
        className="mx-[3px] h-2 w-[57px] appearance-none bg-[linear-gradient(#999,#999)] bg-[length:100%_1px] bg-center bg-no-repeat [&::-webkit-slider-thumb]:h-[7px] [&::-webkit-slider-thumb]:w-[3px] [&::-webkit-slider-thumb]:appearance-none [&::-webkit-slider-thumb]:bg-[#555]"
      />
      <button aria-label="拡大" className="text-[#999]">+</button>
      <span className="ml-2 w-5 text-right">100%</span>
    </footer>
  );
}

const APPS = [
  { name: "Cortana", art: <circle cx="7" cy="7" r="4" fill="none" stroke="#fff" strokeWidth="1.400" /> },
  { name: "タスク ビュー", art: <path d="M3 2v2h6V2M3 12v-2h6v2M3 5.500h6v3H3zM11.500 2v4M11.500 8v4" fill="none" stroke="#b8c2c8" strokeWidth=".9" /> },
  {
    name: "エクスプローラー",
    art: (
      <>
        <path d="M1 2h4l1.500 1.500H13V12H1z" fill="#f7c948" />
        <path d="M3 7.500h8V12H9V9.500H5V12H3z" fill="#3b93d8" />
      </>
    ),
  },
  {
    name: "フォト",
    art: (
      <>
        <path d="M1 2h12v10H1z" fill="#1667c0" />
        <path d="M1 12l5-6 6 6z" fill="#6cc3f5" />
        <circle cx="10.500" cy="4.200" r="1.200" fill="#d7f0ff" />
      </>
    ),
  },
  {
    name: "Microsoft Store",
    art: (
      <>
        <path d="M1 4h12v9H1z" fill="#f3f3f3" />
        <path d="M4.500 4V1.500h5V4" fill="none" stroke="#f3f3f3" />
        <path d="M4.500 6h2.200v2.200H4.500z" fill="#e5502c" /><path d="M7.300 6h2.200v2.200H7.300z" fill="#7db83a" />
        <path d="M4.500 8.800h2.200V11H4.500z" fill="#2a9fe0" /><path d="M7.300 8.800h2.200V11H7.300z" fill="#f5b81c" />
      </>
    ),
  },
  {
    name: "Edge",
    art: (
      <>
        <circle cx="7" cy="7" r="6.500" fill="#1b83d6" />
        <path d="M1 5C3-1 13-.5 13.500 6c0 3-4 3.500-5 2 1.500-3-3-5-7.500-3z" fill="#4cc9a0" />
        <path d="M1 5c3-2 6-1 6.500 1C5 6 4.500 11 9 13 3 14.500-.5 9 1 5z" fill="#1261ad" />
      </>
    ),
  },
  {
    name: "メモ帳",
    art: (
      <>
        <path d="M5 2l8 1-3 9-8-1z" fill="#9fd0df" />
        <path d="M5 2l8 1-.5 1.500-8-1z" fill="#e8eef0" />
        <path d="M9 12l4-4v5z" fill="#c9d6da" />
      </>
    ),
  },
  { name: "録画", line: true, art: <circle cx="7" cy="7" r="6.500" fill="#fff200" /> },
  {
    name: "ペイント",
    art: (
      <>
        <path d="M2 3l4 1 1-3 1.500 3L12 3l-2 4 2 4-4-1-2 2-1-4-4-1 3-1z" fill="#8fa6dc" />
        <path d="M6 5l6 6-3 .3L7.500 13z" fill="#fff" />
      </>
    ),
  },
  {
    name: "メール",
    art: (
      <>
        <path d="M0 5l7-4 7 4v8H0z" fill="#1975c5" />
        <path d="M1.500 4.500h11L7 9z" fill="#fff" />
        <path d="M0 13V5l7 5 7-5v8z" fill="#2fa4ee" />
      </>
    ),
  },
  {
    name: "Filmora",
    line: true,
    art: (
      <>
        <path d="M1 1h12v12H1z" fill="#2d3c45" />
        <path d="M4 3l3.500 2.500L4 8z" fill="#fff" />
        <path d="M9.500 4L12 6.500 6.500 11 4.500 9z" fill="#3fd6b5" />
      </>
    ),
  },
  {
    name: "Excel",
    line: true,
    active: true,
    art: (
      <>
        <path d="M4 1h9.500v12H4z" fill="#21a366" />
        <path d="M8.700 7h4.800v6H4V7z" fill="#107c41" />
        <path d="M0 3.500h7.500v7H0z" fill="#0b6534" />
        <path d="M2.200 5l3 4M5.200 5l-3 4" stroke="#fff" strokeWidth="1.100" />
      </>
    ),
  },
  {
    name: "カメラ",
    line: true,
    art: (
      <>
        <path d="M0 1h10v8H0zM10.500 4l3.500-2v7l-3.500-2zM3 10h5l1 3H2z" fill="#2fb3cf" />
        <circle cx="5" cy="5.500" r="3" fill="#fff" />
        <circle cx="5" cy="5.500" r="1.800" fill="#e5392c" />
      </>
    ),
  },
];

function Taskbar() {
  return (
    <div className="relative flex h-[23px] shrink-0 items-stretch bg-linear-to-r from-[#1d3643] from-60% to-[#1b2c4c] text-white">
      <button aria-label="スタート" className="flex w-7 shrink-0 items-center justify-center">
        <svg viewBox="0 0 10 10" className="size-[10px]" fill="#fff">
          <path d="M0 1.300l4.500-.6v4H0zM5.200.6L10 0v4.700H5.200zM0 5.400h4.500v4L0 8.700zM5.200 5.400H10V10l-4.800-.6z" />
        </svg>
      </button>
      <label className="flex w-[197px] shrink-0 items-center gap-1.5 bg-[#f2f2f2] pl-[7px]">
        <svg viewBox="0 0 10 10" className="size-[10px] shrink-0" fill="none" stroke="#333" strokeWidth=".9">
          <circle cx="6" cy="4" r="3" /><path d="M3.800 6.200L.8 9.500" />
        </svg>
        <input aria-label="検索" placeholder="ここに入力して検索" className="w-full bg-transparent text-[8px] outline-none placeholder:text-[#333]" />
      </label>
      <div className="flex w-[342px] shrink-0">
        {APPS.map((app) => (
          <button
            key={app.name}
            aria-label={app.name}
            className={`flex flex-1 items-center justify-center border-b-2 pt-0.5 ${app.line ? "border-[#86bfe0]" : "border-transparent"} ${
              app.active ? "bg-[#4b6069]" : ""
            }`}
          >
            <svg viewBox="0 0 14 14" className="size-[14px]">{app.art}</svg>
          </button>
        ))}
      </div>
      <div className="ml-auto flex items-center text-[8px]">
        <svg viewBox="0 0 12 12" className="size-3">
          <circle cx="6" cy="5.500" r="5" fill="#f8b830" />
          <path d="M3 11.500a2 2 0 010-4 3 3 0 015.500-.5 2.300 2.300 0 01.5 4.500z" fill="#e4ebf2" />
        </svg>
        <span className="ml-1 w-5 text-[7px]">24°C</span>
        <div className="flex w-[118px] items-center justify-between pr-3 pl-3 opacity-60">
          <Chevron className="rotate-180" />
          <svg viewBox="0 0 60 10" className="h-[10px] w-[60px]" fill="none" stroke="#ccc" strokeWidth=".8">
            <circle cx="8" cy="5" r="3" /><path d="M20 2h8v6h-8zM22 5h4" />
            <path d="M36 7a2 2 0 010-4 3 3 0 016 0 2 2 0 010 4z" fill="#ccc" />
            <path d="M56 1l3 8" stroke="#e33" strokeWidth="2" />
          </svg>
          <Chevron className="rotate-180" />
        </div>
        <svg viewBox="0 0 9 9" className="size-[9px]" fill="none" stroke="#ccc" strokeWidth=".9">
          <path d="M.8 8L4 4.500M3 6.500q3 1 3-1t-2-1.500M5 4l3.500-3M6 2.500q2.500 0 2 2" />
        </svg>
        <span className="w-[27px] text-center font-['Liberation_Serif',serif] text-[10px]">A</span>
        <svg viewBox="0 0 10 10" className="size-[10px]">
          <circle cx="4.500" cy="4.500" r="4.500" fill="#1668d8" /><circle cx="8.500" cy="7.500" r="1.500" fill="#e5502c" />
        </svg>
        <div className="w-[54px] text-center text-[7px] leading-[10px]">
          9:23
          <br />
          2021/10/06
        </div>
        <svg viewBox="0 0 10 10" className="mr-[13px] size-[10px]" fill="#fff">
          <path d="M0 0h10v8H7L5 10V8H0z" /><path d="M2 2.500h6M2 4.500h6" stroke="#1b2c4c" strokeWidth=".7" />
        </svg>
      </div>
      <p className="absolute top-0 right-[126px] text-[19px] leading-[23px] whitespace-nowrap text-[#d5dbe2]">© 2021 saym.</p>
    </div>
  );
}

export default function App() {
  return (
    <div className="h-screen bg-black px-20">
      <div className="flex h-full flex-col overflow-hidden font-['Noto_Sans','Noto_Sans_CJK_JP',sans-serif] [font-feature-settings:'palt']">
        <TitleBar />
        <RibbonTabs />
        <Ribbon />
        <FormulaBar />
        <Sheet />
        <SheetTabs />
        <StatusBar />
        <Taskbar />
      </div>
    </div>
  );
}
